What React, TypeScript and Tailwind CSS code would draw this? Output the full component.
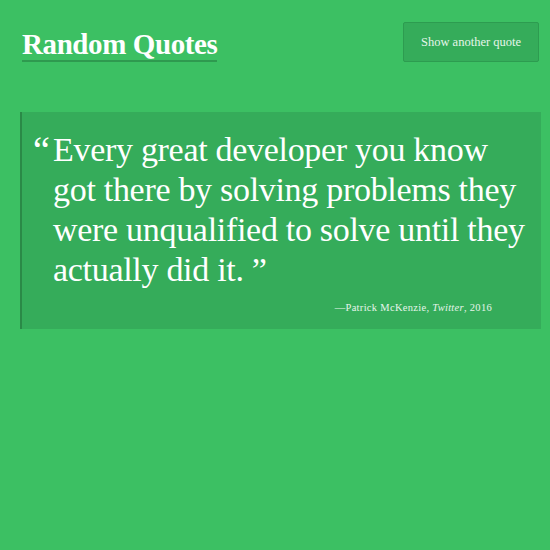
export default function App() {
  return (
    <div
      className="min-h-[550px] w-full bg-[#3cc063] text-white"
      style={{ fontFamily: '"Liberation Serif", "DejaVu Serif", serif' }}
    >
      <header className="flex items-start justify-between pl-[22px] pr-[11px] pt-[22px]">
        <h1 className="mt-[7px] border-b-[2px] border-[#2e9a4f] pb-[1px] text-[29px] font-bold leading-[30px] tracking-[-0.4px]">
          Random Quotes
        </h1>
        <button className="h-[40px] w-[136px] rounded-[2px] border border-[#2d9c50] bg-[#35ac5a] text-[12.5px] text-[#e6f5ea]">
          Show another quote
        </button>
      </header>

      <blockquote className="ml-[20px] mr-[9px] mt-[50px] border-l-[2px] border-[#2a8a47] bg-[#35ac5a] pb-[14px] pr-[10px] pt-[18px]">
        <div className="flex">
          <span className="w-[31px] shrink-0 pl-[11px] text-[38px] leading-[40px]">“</span>
          <p className="whitespace-nowrap text-[34px] leading-[40px] tracking-[-0.3px]">
            Every great developer you know
            <br />
            got there by solving problems they
            <br />
            were unqualified to solve until they
            <br />
            actually did it. ”
          </p>
        </div>
        <p className="mt-[11px] pr-[39px] text-right text-[10.5px] leading-[14px] tracking-[0.3px] text-[#e6f5ea]">
          —Patrick McKenzie, <em>Twitter</em>, 2016
        </p>
      </blockquote>
    </div>
  );
}
